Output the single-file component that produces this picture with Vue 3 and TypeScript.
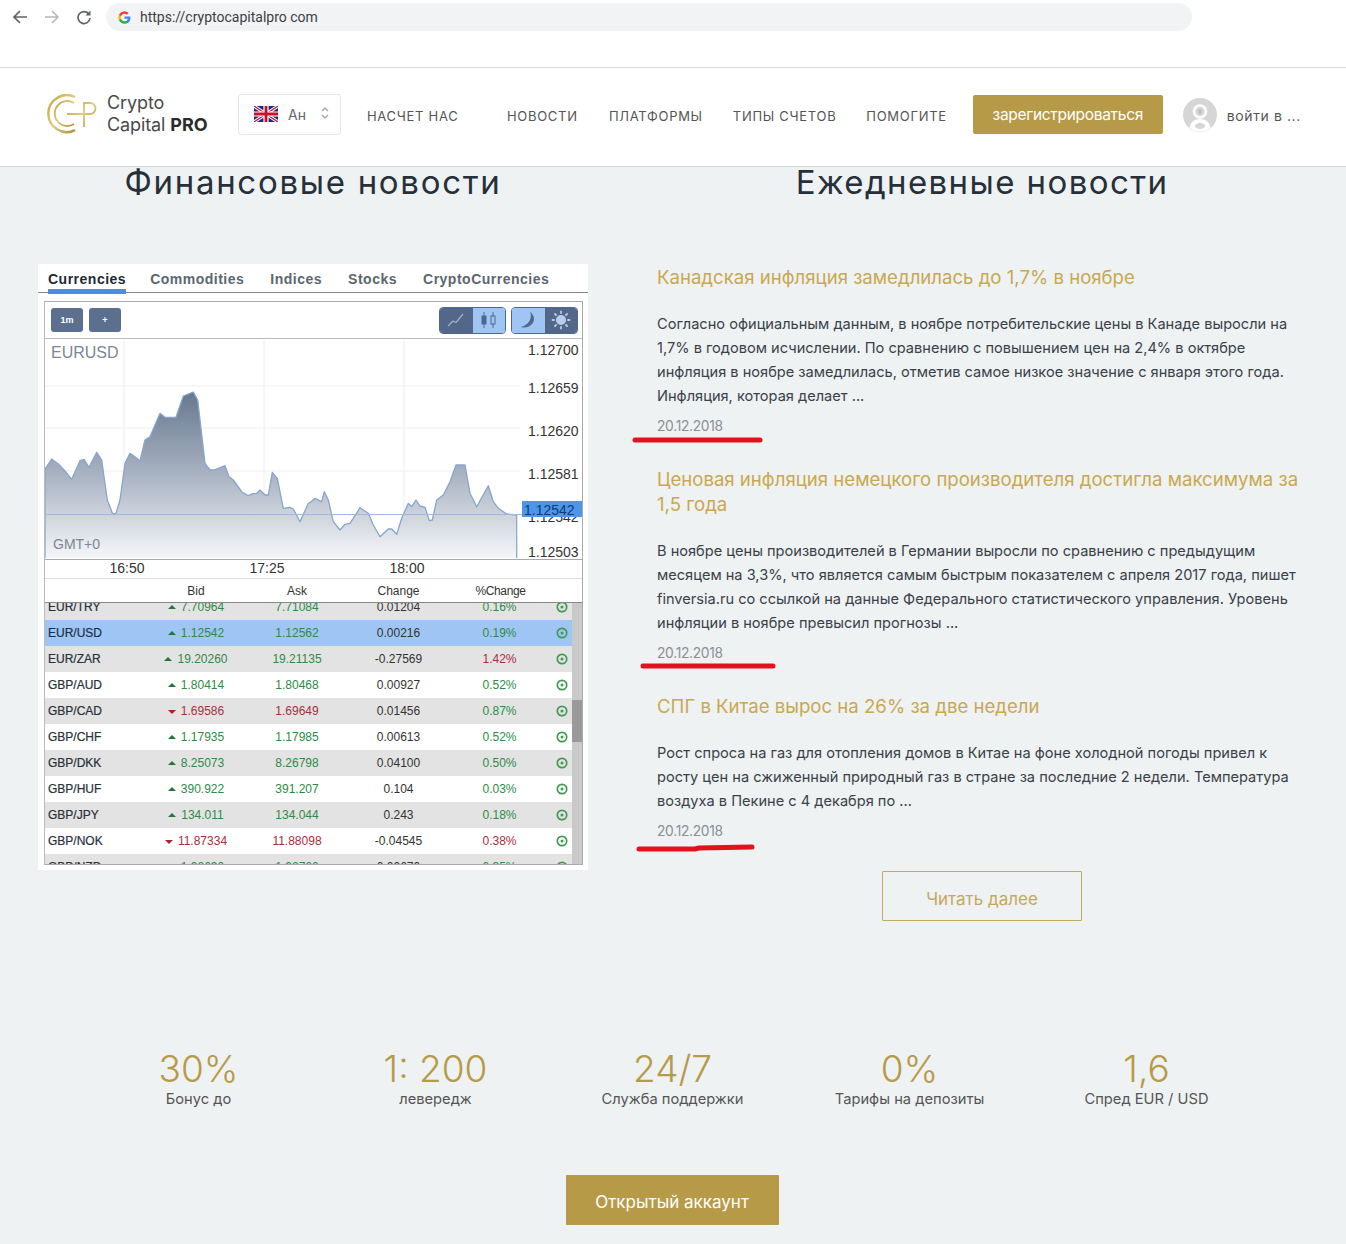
<script setup lang="ts">
interface Quote {
  pair: string; bid: string; ask: string; change: string; pct: string;
  down?: boolean; pctDown?: boolean; kind: 'odd' | 'even' | 'active';
}
const quotes: Quote[] = [
  { pair: 'EUR/TRY', bid: '7.70964', ask: '7.71084', change: '0.01204', pct: '0.16%', kind: 'odd' },
  { pair: 'EUR/USD', bid: '1.12542', ask: '1.12562', change: '0.00216', pct: '0.19%', kind: 'active' },
  { pair: 'EUR/ZAR', bid: '19.20260', ask: '19.21135', change: '-0.27569', pct: '1.42%', pctDown: true, kind: 'odd' },
  { pair: 'GBP/AUD', bid: '1.80414', ask: '1.80468', change: '0.00927', pct: '0.52%', kind: 'even' },
  { pair: 'GBP/CAD', bid: '1.69586', ask: '1.69649', change: '0.01456', pct: '0.87%', down: true, kind: 'odd' },
  { pair: 'GBP/CHF', bid: '1.17935', ask: '1.17985', change: '0.00613', pct: '0.52%', kind: 'even' },
  { pair: 'GBP/DKK', bid: '8.25073', ask: '8.26798', change: '0.04100', pct: '0.50%', kind: 'odd' },
  { pair: 'GBP/HUF', bid: '390.922', ask: '391.207', change: '0.104', pct: '0.03%', kind: 'even' },
  { pair: 'GBP/JPY', bid: '134.011', ask: '134.044', change: '0.243', pct: '0.18%', kind: 'odd' },
  { pair: 'GBP/NOK', bid: '11.87334', ask: '11.88098', change: '-0.04545', pct: '0.38%', down: true, pctDown: true, kind: 'even' },
  { pair: 'GBP/NZD', bid: '1.92690', ask: '1.92760', change: '0.00670', pct: '0.35%', kind: 'odd' },
];

const leftPts: [number, number][] = [[45,628],[65,597],[85,612],[105,633],[125,658],[150,602],[162,598],[177,622],[200,577],[215,600],[232,720],[248,762],[258,760],[270,720],[285,610],[300,580],[315,590],[330,603],[345,540],[360,530],[390,460],[405,472],[438,472],[460,408],[490,396],[503,420],[525,610],[540,630],[552,630],[585,617],[597,650],[610,660],[635,695],[655,707],[665,702],[680,700],[690,690],[705,705],[715,705],[727,637],[742,655],[760,745],[780,742],[790,747],[810,785],[835,730]];
const rightPts: [number, number][] = [[0,728],[15,715],[35,725],[43,695],[55,720],[70,785],[90,810],[105,793],[120,790],[150,743],[175,760],[190,795],[210,830],[235,807],[245,807],[260,823],[275,775],[295,730],[305,740],[318,720],[330,738],[345,742],[358,782],[367,780],[380,720],[400,705],[420,665],[438,615],[465,615],[480,700],[500,740],[535,677],[550,725],[565,745],[590,762],[620,765]];
const pts: string[] = [
  ...leftPts.map(([x, y]) => `${(30 + x / 3).toFixed(1)} ${(260 + y / 3).toFixed(1)}`),
  ...rightPts.map(([x, y]) => `${(310 + x / 3).toFixed(1)} ${(260 + y / 3).toFixed(1)}`),
];
const linePath = 'M' + pts.join(' L');
const areaPath = linePath + ' L516.7 558 L45 558 Z';
const gridY = [386, 428, 471];
const gridX = [124, 264, 404];
const axis = [
  { t: '1.12700', y: 355 }, { t: '1.12659', y: 393 }, { t: '1.12620', y: 436 },
  { t: '1.12581', y: 479 }, { t: '1.12542', y: 522 }, { t: '1.12503', y: 557 },
];
const stats = [
  { n: '30%', l: 'Бонус до' }, { n: '1: 200', l: 'левередж' },
  { n: '24/7', l: 'Служба поддержки' }, { n: '0%', l: 'Тарифы на депозиты' }, { n: '1,6', l: 'Спред EUR / USD' },
];
</script>

<template>
  <div class="page">
    <div class="browser">
      <svg class="nav-ico" width="16" height="16" viewBox="0 0 16 16"><path d="M15 8H2M8 2 2 8l6 6" fill="none" stroke="#5f6368" stroke-width="1.7"/></svg>
      <svg class="nav-ico" width="16" height="16" viewBox="0 0 16 16"><path d="M1 8h13M8 2l6 6-6 6" fill="none" stroke="#b4b7ba" stroke-width="1.5"/></svg>
      <svg class="nav-ico" width="16" height="16" viewBox="0 0 16 16"><path d="M13 5.2A6 6 0 1 0 14 9" fill="none" stroke="#5f6368" stroke-width="1.7"/><path d="M14.5 1.5v5h-5z" fill="#5f6368"/></svg>
      <div class="url">
        <svg width="13" height="13" viewBox="0 0 24 24"><path d="M23 12.3c0-.8-.1-1.6-.2-2.3H12v4.4h6.2a5.3 5.3 0 0 1-2.3 3.5v2.9h3.7c2.2-2 3.4-5 3.4-8.5z" fill="#4285f4"/><path d="M12 23.5c3.1 0 5.7-1 7.6-2.8l-3.7-2.9c-1 .7-2.3 1.1-3.9 1.1-3 0-5.5-2-6.4-4.7H1.8v3A11.5 11.5 0 0 0 12 23.5z" fill="#34a853"/><path d="M5.6 14.2a6.9 6.9 0 0 1 0-4.4v-3H1.8a11.5 11.5 0 0 0 0 10.4z" fill="#fbbc05"/><path d="M12 5.1c1.7 0 3.2.6 4.4 1.7l3.3-3.3A11.5 11.5 0 0 0 1.8 6.8l3.8 3c.9-2.7 3.4-4.7 6.4-4.7z" fill="#ea4335"/></svg>
        <span>https://cryptocapitalpro com</span>
      </div>
    </div>

    <header class="site-head">
      <div class="logo">
        <svg width="50" height="40" viewBox="47 94 50 40">
          <defs>
            <linearGradient id="gold" x1="0" y1="0" x2="1" y2="1"><stop offset="0" stop-color="#c4a23a"/><stop offset=".5" stop-color="#e0cc80"/><stop offset="1" stop-color="#b08f34"/></linearGradient>
          </defs>
          <path d="M75 97A18.5 18.5 0 1 0 75 130.200" fill="none" stroke="url(#gold)" stroke-width="2.4"/>
          <path d="M74 103A12.5 12.5 0 1 0 74 124" fill="none" stroke="url(#gold)" stroke-width="1.8"/>
          <path d="M67 114H90a5.5 5.5 0 0 0 0-11H84V127" fill="none" stroke="url(#gold)" stroke-width="1.8"/>
        </svg>
        <div class="logo-text">Crypto<br>Capital <b>PRO</b></div>
      </div>
      <div class="lang">
        <svg width="24" height="16" viewBox="0 0 60 40">
          <rect width="60" height="40" fill="#1f2a7c"/>
          <path d="M0 0 60 40M60 0 0 40" stroke="#fff" stroke-width="8"/>
          <path d="M0 0 60 40M60 0 0 40" stroke="#c8102e" stroke-width="3"/>
          <path d="M30 0V40M0 20H60" stroke="#fff" stroke-width="13"/>
          <path d="M30 0V40M0 20H60" stroke="#c8102e" stroke-width="7"/>
        </svg>
        <span class="lang-name">Ан</span>
        <svg class="lang-arrows" width="8" height="14" viewBox="0 0 8 14"><path d="M1 5 4 2l3 3M1 9l3 3 3-3" fill="none" stroke="#aaa" stroke-width="1.5"/></svg>
      </div>
      <nav class="menu">
        <a class="m1">НАСЧЕТ НАС</a>
        <a class="m2">НОВОСТИ</a>
        <a class="m3">ПЛАТФОРМЫ</a>
        <a class="m3">ТИПЫ СЧЕТОВ</a>
        <a class="m3">ПОМОГИТЕ</a>
      </nav>
      <button class="signup">зарегистрироваться</button>
      <svg class="avatar" width="34" height="34" viewBox="0 0 34 34">
        <circle cx="17" cy="17" r="17" fill="#d6d6d6"/>
        <circle cx="17" cy="13.5" r="6" fill="none" stroke="#fff" stroke-width="2.5"/>
        <circle cx="17" cy="13.5" r="2" fill="#bdbdbd"/>
        <path d="M6.5 30c1-6 5-9 10.5-9s9.5 3 10.5 9a17 17 0 0 1-21 0z" fill="#fff"/>
        <ellipse cx="17" cy="28" rx="5" ry="3" fill="#d6d6d6"/>
      </svg>
      <span class="login">войти в ...</span>
    </header>

    <main class="content">
      <div class="columns">
        <section class="col-left">
          <h2>Финансовые новости</h2>
          <div class="widget">
            <div class="tabs">
              <span class="tab on">Currencies</span>
              <span class="tab">Commodities</span>
              <span class="tab">Indices</span>
              <span class="tab">Stocks</span>
              <span class="tab">CryptoCurrencies</span>
            </div>
            <div class="frame">
              <div class="toolbar">
                <span class="tb">1m</span>
                <span class="tb">+</span>
                <span class="tb-space"></span>
                <div class="seg">
                  <span class="dark"><svg width="20" height="16" viewBox="0 0 20 16"><path d="M2 14 7 9l3 1.5L17 2" fill="none" stroke="#9fb3cf" stroke-width="1.2"/></svg></span>
                  <span class="light"><svg width="20" height="18" viewBox="0 0 20 18"><g fill="#52678a" stroke="#52678a"><path d="M5 1v16" fill="none"/><rect x="3" y="5" width="4" height="8"/></g><g fill="none" stroke="#52678a"><path d="M14 1v16" /><rect x="12" y="5" width="4" height="8" fill="#9fc5f5"/></g></svg></span>
                </div>
                <div class="seg seg2">
                  <span class="light"><svg width="20" height="20" viewBox="0 0 20 20"><path d="M12 2c2 4 1 12-9 15 6 2 13-2 13-8 0-3-2-6-4-7z" fill="#52678a"/></svg></span>
                  <span class="dark"><svg width="20" height="20" viewBox="0 0 20 20"><circle cx="10" cy="10" r="5" fill="#b9cdea"/><g stroke="#b9cdea" stroke-width="1.8" stroke-linecap="round"><path d="M10 1.5v1.5M10 17v1.5M1.5 10H3M17 10h1.5M4 4l1 1M15 15l1 1M4 16l1-1M15 5l1-1"/></g></svg></span>
                </div>
              </div>
              <svg class="chart" width="538" height="238" viewBox="45 339 538 238">
                <defs>
                  <linearGradient id="area" x1="0" y1="392" x2="0" y2="558" gradientUnits="userSpaceOnUse">
                    <stop offset="0" stop-color="#66788f"/>
                    <stop offset=".5" stop-color="#a9b3c2"/>
                    <stop offset="1" stop-color="#f5f6f8"/>
                  </linearGradient>
                </defs>
                <line v-for="y in gridY" :key="y" x1="45" x2="520" :y1="y" :y2="y" stroke="#eeeeee"/>
                <line v-for="x in gridX" :key="x" :x1="x" :x2="x" y1="340" y2="558" stroke="#eeeeee"/>
                <path :d="areaPath" fill="url(#area)"/>
                <path :d="linePath" fill="none" stroke="#86a5cf" stroke-width="1.3" stroke-linejoin="round"/>
                <path d="M45 469V558M516.7 515V558" stroke="#7fa3d3" stroke-width="1.2" fill="none"/>
                <line x1="45" x2="522" y1="514.5" y2="514.5" stroke="#9db9dc"/>
                <text x="51" y="358" class="sym">EURUSD</text>
                <text x="53" y="549" class="gmt">GMT+0</text>
                <text v-for="a in axis" :key="a.t" x="528" :y="a.y" class="ax">{{ a.t }}</text>
                <rect x="522" y="501" width="60" height="16" fill="#4c96ea"/>
                <text x="524" y="514.5" class="ax tag">1.12542</text>
                <line x1="45" x2="583" y1="559.5" y2="559.5" stroke="#aaaaaa"/>
                <text x="127" y="573" class="ax mid">16:50</text>
                <text x="267" y="573" class="ax mid">17:25</text>
                <text x="407" y="573" class="ax mid">18:00</text>
              </svg>
              <div class="thead">
                <span></span><span>Bid</span><span>Ask</span><span>Change</span><span class="pct-h">%Change</span><span></span>
              </div>
              <div class="tbody">
                <div class="rows">
                  <div v-for="q in quotes" :key="q.pair" class="row" :class="q.kind">
                    <span class="pair">{{ q.pair }}</span>
                    <span class="num" :class="q.down ? 'red' : 'green'"><i class="tri" :class="{ dn: q.down }"></i>{{ q.bid }}</span>
                    <span class="num" :class="q.down ? 'red' : 'green'">{{ q.ask }}</span>
                    <span class="num chg">{{ q.change }}</span>
                    <span class="num" :class="q.pctDown ? 'red' : 'green'">{{ q.pct }}</span>
                    <span class="st"><svg width="12" height="12" viewBox="0 0 12 12"><circle cx="6" cy="6" r="4.7" fill="none" stroke="#3f9a52" stroke-width="1.7"/><circle cx="6" cy="6" r="1.5" fill="#3f9a52"/></svg></span>
                  </div>
                </div>
                <div class="scroll"><div class="thumb"></div></div>
              </div>
            </div>
          </div>
        </section>

        <section class="col-right">
          <h2>Ежедневные новости</h2>
          <article class="news first">
            <h3>Канадская инфляция замедлилась до 1,7% в ноябре</h3>
            <p>Согласно официальным данным, в ноябре потребительские цены в Канаде выросли на<br>1,7% в годовом исчислении. По сравнению с повышением цен на 2,4% в октябре<br>инфляция в ноябре замедлилась, отметив самое низкое значение с января этого года.<br>Инфляция, которая делает ...</p>
            <time>20.12.2018</time>
            <svg class="mark m-a" width="134" height="10" viewBox="0 0 134 10"><path d="M4 5H129" stroke="#e3101d" stroke-width="5" stroke-linecap="round"/></svg>
          </article>
          <article class="news">
            <h3>Ценовая инфляция немецкого производителя достигла максимума за<br>1,5 года</h3>
            <p>В ноябре цены производителей в Германии выросли по сравнению с предыдущим<br>месяцем на 3,3%, что является самым быстрым показателем с апреля 2017 года, пишет<br>finversia.ru со ссылкой на данные Федерального статистического управления. Уровень<br>инфляции в ноябре превысил прогнозы ...</p>
            <time>20.12.2018</time>
            <svg class="mark m-b" width="140" height="10" viewBox="0 0 140 10"><path d="M4 5H134" stroke="#e3101d" stroke-width="5" stroke-linecap="round"/></svg>
          </article>
          <article class="news">
            <h3>СПГ в Китае вырос на 26% за две недели</h3>
            <p>Рост спроса на газ для отопления домов в Китае на фоне холодной погоды привел к<br>росту цен на сжиженный природный газ в стране за последние 2 недели. Температура<br>воздуха в Пекине с 4 декабря по ...</p>
            <time>20.12.2018</time>
            <svg class="mark m-c" width="124" height="12" viewBox="0 0 124 12"><path d="M4 8H60L64 7 117 6" fill="none" stroke="#e3101d" stroke-width="5" stroke-linecap="round"/></svg>
          </article>
          <button class="more">Читать далее</button>
        </section>
      </div>

      <div class="stats">
        <div v-for="s in stats" :key="s.n" class="stat">
          <div class="stat-n">{{ s.n }}</div>
          <div class="stat-l">{{ s.l }}</div>
        </div>
      </div>
      <div class="cta-wrap"><button class="cta">Открытый аккаунт</button></div>
    </main>
  </div>
</template>

<style>
html, body { margin: 0; background: #eef2f3; }
</style>

<style scoped>
.page { width: 1346px; font-family: Inter, "Noto Sans", sans-serif; background: #eef2f3; }

.browser { height: 67px; box-sizing: content-box; background: #fff; border-bottom: 1px solid #dcdcdc; display: flex; align-items: flex-start; padding-left: 12px; gap: 16px; }
.nav-ico { margin-top: 9px; }
.url { margin: 3px 0 0 -2px; width: 1086px; height: 28px; border-radius: 14px; background: #f1f3f4; display: flex; align-items: center; gap: 9px; padding-left: 12px; box-sizing: border-box; font: 14px Roboto, sans-serif; color: #3c4043; }

.site-head { height: 98px; box-sizing: content-box; background: #fff; border-bottom: 1px solid #d5d8d9; display: flex; align-items: center; padding: 0 0 0 47px; }
.logo { display: flex; align-items: center; width: 191px; margin-top: -6px; }
.logo-text { margin-left: 10px; font-size: 18px; line-height: 22px; color: #4a4a4a; letter-spacing: -.1px; }
.logo-text b { color: #2b2b2b; font-weight: 700; }
.lang { width: 103px; height: 41px; box-sizing: border-box; border: 1px solid #e6e6e6; border-radius: 3px; display: flex; align-items: center; padding-left: 15px; margin-top: -6px; }
.lang-name { margin-left: 10px; font-size: 14px; color: #666; }
.lang-arrows { margin-left: 15px; margin-top: -2px; }
.menu { display: flex; font-size: 13px; color: #555; letter-spacing: .7px; white-space: nowrap; margin-top: -3px; }
.menu a { display: block; }
.m1 { margin-left: 26px; width: 140px; }
.m2 { width: 102px; }
.m3 { padding-right: 30px; }
.signup { margin-left: -4px; margin-top: -6px; width: 190px; height: 39px; border: 0; border-radius: 2px; background: #b79a48; color: #fff; font: 15.5px Inter, sans-serif; letter-spacing: -.3px; padding: 0; }
.avatar { margin-left: 20px; margin-top: -4px; }
.login { margin-left: 10px; margin-top: -3px; font-size: 14px; color: #555; letter-spacing: .6px; white-space: nowrap; }

.columns { display: grid; grid-template-columns: 550px 650px; column-gap: 69px; padding-left: 38px; }
h2 { margin: -2px 0 0; font-size: 33px; line-height: 34px; font-weight: 400; text-align: center; color: #27303a; letter-spacing: 1.4px; white-space: nowrap; }
.col-left h2 { letter-spacing: 1.7px; }

.widget { margin-top: 65px; height: 606px; background: #fff; box-sizing: border-box; font-family: "Liberation Sans", sans-serif; display: flex; flex-direction: column; }
.tabs { height: 29px; box-sizing: border-box; border-bottom: 1px solid #888; padding: 7px 0 0 10px; display: flex; gap: 26px; font-weight: 700; font-size: 14px; letter-spacing: .5px; color: #5c6670; flex: none; }
.tab { position: relative; height: 16px; line-height: 16px; }
.tab.on { color: #1f2a36; margin-right: -2px; }
.tab.on::after { content: ""; position: absolute; left: 0; right: 0; top: 18px; height: 5px; background: #4a90e2; }
.frame { margin: 8px 5px 5px 6px; flex: 1; border: 1px solid #aaa; border-left-color: #bbb; display: flex; flex-direction: column; min-height: 0; }
.toolbar { height: 37px; flex: none; box-sizing: border-box; border-bottom: 1px solid #bbb; display: flex; align-items: center; padding: 0 4px 0 6px; gap: 6px; }
.tb { width: 32px; height: 24px; border-radius: 3px; background: #5b6f8f; color: #fff; font-size: 9px; font-weight: 700; display: flex; align-items: center; justify-content: center; }
.tb-space { flex: 1; }
.seg { display: flex; height: 27px; border-radius: 4px; overflow: hidden; border: 1px solid #52678a; box-sizing: border-box; margin-left: -1px; }
.seg span { width: 32.5px; display: flex; align-items: center; justify-content: center; }
.seg .dark { background: #52678a; }
.seg .light { background: #9fc5f5; }
.chart { display: block; flex: none; }
.chart text { font-family: "Liberation Sans", sans-serif; }
.sym { font-size: 16px; fill: #7b8794; }
.gmt { font-size: 14px; fill: #7b8794; }
.ax { font-size: 14px; fill: #333; }
.tag { fill: #123a6b; }
.mid { text-anchor: middle; }
.thead { height: 25px; flex: none; display: grid; grid-template-columns: 101px 100px 102px 101px 101px 22px; border-bottom: 1px solid #888; align-items: center; font-size: 12px; color: #333; text-align: center; box-sizing: border-box; margin-top: 1px; border-top: 1px solid #ddd; }
.pct-h { letter-spacing: -.4px; padding-left: 2px; }
.tbody { flex: 1; overflow: hidden; position: relative; display: flex; min-height: 0; }
.rows { flex: 1; margin-top: -9px; }
.row { height: 26px; display: grid; grid-template-columns: 101px 100px 102px 101px 101px 22px; align-items: center; font-size: 12px; text-align: center; }
.row.odd { background: #e3e3e3; }
.row.even { background: #fff; }
.row.active { background: #9fc5f5; }
.pair { text-align: left; padding-left: 3px; color: #26303a; -webkit-text-stroke: .2px #26303a; }
.active .pair { color: #14304f; }
.green { color: #2e8b46; }
.red { color: #a5303c; }
.chg { color: #333; }
.tri { display: inline-block; width: 0; height: 0; border: 4px solid transparent; border-top: 0; border-bottom: 4px solid #1f7a3a; margin-right: 5px; vertical-align: 2px; }
.tri.dn { border-bottom: 0; border-top: 4px solid #b3202c; vertical-align: 1px; }
.st { display: flex; justify-content: center; padding-left: 2px; }
.scroll { width: 10px; flex: none; background: #c9c9c9; }
.thumb { margin-top: 97px; height: 42px; background: #9a9a9a; }

.news { position: relative; margin-bottom: 33px; }
.news.first { margin-top: 66px; }
h3 { margin: 0 0 22px; font-size: 18.6px; line-height: 25px; font-weight: 400; color: #c9a850; white-space: nowrap; }
.news p { margin: 0 0 10px; font-size: 14.6px; line-height: 24px; color: #3a4149; white-space: nowrap; }
time { display: block; font-size: 13.8px; line-height: 16px; color: #8a8f94; letter-spacing: -.3px; }
.mark { position: absolute; }
.m-a { left: -26px; top: 170px; }
.m-b { left: -18px; top: 194px; }
.m-c { left: -22px; top: 147px; }
.news:last-of-type { margin-bottom: 32px; }
.more { display: block; margin: 0 auto; width: 200px; height: 50px; background: transparent; border: 1px solid #c4a95c; color: #c4a95c; font: 17px Inter, sans-serif; border-radius: 1px; padding: 5px 0 0; }

.stats { display: grid; grid-template-columns: repeat(5, 237px); padding-left: 80px; margin-top: 128px; text-align: center; }
.stat-n { font-size: 37px; line-height: 40px; font-weight: 300; color: #b79a48; }
.stat-l { font-size: 14.7px; line-height: 20px; color: #555; white-space: nowrap; }
.cta-wrap { display: flex; justify-content: center; padding: 66px 2px 19px 0; }
.cta { width: 213px; height: 50px; background: #b79a48; border: 0; border-radius: 1px; color: #fff; font: 17px Inter, sans-serif; padding: 4px 0 0; }
</style>
